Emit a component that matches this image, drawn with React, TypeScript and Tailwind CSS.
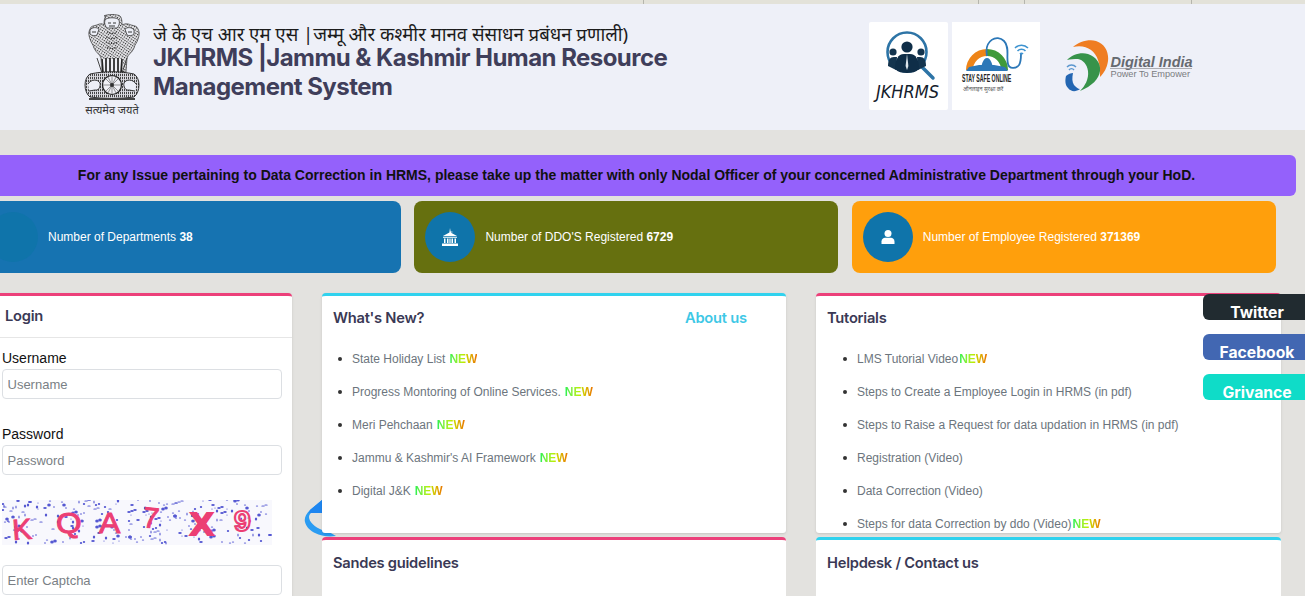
import React from "react";

const NewTag = ({ tight }: { tight?: boolean }) => (
  <span className={`inline-block bg-gradient-to-r from-[#00f050] via-[#b8f000] to-[#e87000] bg-clip-text text-[12px] leading-none font-bold text-transparent [font-family:'Liberation_Sans',sans-serif] ${tight ? "ml-[1px]" : "ml-[4px]"}`}>
    NEW
  </span>
);

const Emblem = () => (
  <svg width="56" height="88" viewBox="0 0 56 88" className="block">
    <defs>
      <pattern id="hatch" width="2.4" height="2.4" patternUnits="userSpaceOnUse" patternTransform="rotate(35)">
        <rect width="2.4" height="2.4" fill="#e6e6ea" />
        <rect width="1.3" height="1.1" fill="#2c2c2c" />
      </pattern>
      <pattern id="hatch2" width="2" height="3" patternUnits="userSpaceOnUse">
        <rect width="2" height="3" fill="#dcdce2" />
        <rect width="0.9" height="2.2" fill="#333" />
      </pattern>
    </defs>
    <path d="M20 2c3-2 13-2 16 0 2 2 2 6 2 9 4-2 7-1 9 0 4 1 6 1 7 4 2 4 1 7 0 10-1 4-3 5-4 9-2 5-6 6-7 10l-1 14H18l-1-14c-1-4-5-5-7-10-1-4-3-5-4-9-1-3-2-6 0-10 1-3 3-3 7-4 2-1 5-2 7 0 0-3 0-7 2-9z" fill="url(#hatch)" stroke="#333" strokeWidth="0.7" />
    <g fill="#eceef6" stroke="#222" strokeWidth="0.7">
      <path d="M21 6c2-3 12-3 14 0 1 3 0 6-2 8h-10c-2-2-3-5-2-8z" />
      <path d="M6 16c2-3 7-3 9-1l-2 6c-2 1-5 1-7-1z" />
      <path d="M50 16c-2-3-7-3-9-1l2 6c2 1 5 1 7-1z" />
    </g>
    <g stroke="#222" strokeWidth="0.9" fill="none">
      <path d="M24 9h3M29 9h3M25 12h6M8 18h4M44 18h4" />
      <path d="M23 18c3 2 7 2 10 0M22 23c4 2 8 2 12 0M22 28c4 2 8 2 12 0M23 33c3 2 7 2 10 0" strokeDasharray="1.5 1" />
    </g>
    <path d="M17 45h22l-1 14H18z" fill="#f0f0f5" />
    <path d="M18 45l1 14M22 44v15M26 44v15M30 44v15M34 44v15M38 45l-1 14" stroke="#222" strokeWidth="1.7" />
    <path d="M13 44l5 15M43 44l-5 15" stroke="#444" strokeWidth="1" />
    <path d="M6 60c14-3 30-3 44 0 3 2 5 6 5 11s-2 10-5 12c-14 2-30 2-44 0-3-2-5-7-5-12s2-9 5-11z" fill="url(#hatch2)" stroke="#222" strokeWidth="0.9" />
    <circle cx="28" cy="71" r="9.500" fill="#f0f0f5" stroke="#222" strokeWidth="1.2" />
    <circle cx="28" cy="71" r="2" fill="#333" />
    <path d="M28 62v18M19 71h18M22 65l12 12M34 65l-12 12M24 63l8 16M32 63l-8 16" stroke="#333" strokeWidth="0.5" />
    <path d="M4 70c3-5 10-5 12-1 1 4-2 8-5 7l-6 1M52 70c-3-5-10-5-12-1-1 4 2 8 5 7l6 1" fill="#eceef6" stroke="#222" strokeWidth="0.9" />
    <path d="M5 84h46v2H5z" fill="#444" />
  </svg>
);

const JkLogo = () => (
  <svg width="79" height="88" viewBox="0 0 79 88" className="block rounded-[2px] bg-white">
    <circle cx="38" cy="30" r="19.5" fill="#fff" stroke="#2d74a6" strokeWidth="2.6" />
    <path d="M52 44l12 12" stroke="#2d74a6" strokeWidth="3.500" strokeLinecap="round" />
    <circle cx="24" cy="30" r="3.600" fill="#14344e" />
    <circle cx="52" cy="30" r="3.600" fill="#14344e" />
    <path d="M19 44c0-6 2-9 6-9h3l-1 13zM57 44c0-6-2-9-6-9h-3l1 13z" fill="#14344e" />
    <circle cx="38" cy="25" r="5.600" fill="#0f2e48" />
    <path d="M26 47c0-9 3-15 9-15h6c6 0 9 6 9 15-3 3-7 4-12 4s-9-1-12-4z" fill="#0f2e48" />
    <path d="M38 32l-1.400 12 1.400 4 1.400-4z" fill="#dfe8ee" />
    <text x="38.500" y="76" textAnchor="middle" fontSize="18" fill="#14202c" fontFamily="'DejaVu Sans Condensed','DejaVu Sans',sans-serif" fontStyle="italic">JKHRMS</text>
  </svg>
);

const SafeLogo = () => (
  <svg width="88" height="88" viewBox="0 0 88 88" className="block bg-white">
    <path d="M14 48a21 21 0 0 1 21-21v7a14 14 0 0 0-14 14z" fill="#ee8418" />
    <path d="M35 27a21 21 0 0 1 21 21h-7a14 14 0 0 0-14-14z" fill="#3f9a3a" />
    <path d="M14 49h42l-3-4-11-2H27l-10 2z" fill="#2c78b8" />
    <path d="M29 48c0-4 2-12 6-12s6 8 6 12z" fill="#2c78b8" />
    <path d="M35 34c-3-16 10-22 17-15 6 6 2 16 4 23 1 5 8 5 11 1 2-3 2-6 2-11" fill="none" stroke="#2c78b8" strokeWidth="1.800" />
    <path d="M63 26a9 9 0 0 1 13 0M65.500 29a5.500 5.500 0 0 1 8 0M68 32a2 2 0 0 1 3 0" fill="none" stroke="#3d93d0" strokeWidth="1.600" />
    <text transform="translate(10 60) scale(0.52 1)" fontSize="10" fontWeight="700" fill="#232323" fontFamily="'Liberation Sans',sans-serif">STAY SAFE ONLINE</text>
    <text x="11" y="69" fontSize="5.500" fill="#555" fontFamily="'Noto Sans',sans-serif">ऑनलाइन सुरक्षा करें</text>
  </svg>
);

const DigitalLogo = () => (
  <svg width="130" height="54" viewBox="0 0 130 54" className="block">
    <path d="M8 7C14 2 23-1 31 1c9 3 13 11 12 20-1 7-4 12-8 16 0-6 0-12-2-17C30 10 20 4 8 7z" fill="#ef7d22" />
    <path d="M2 20c5-5 13-8 21-6 8 3 13 9 12 17-1 8-8 15-20 20 5-5 9-12 8-20-1-7-5-11-10-12-4 0-8 0-11 1z" fill="#37934a" />
    <path d="M1 36c2-2 5-3 7-3-1 5-1 9 1 12 2 2 4 4 6 4-4 3-9 3-12-1-3-3-3-8-2-12z" fill="#2466b2" />
    <path d="M2 27a6 6 0 0 1 9 0M4 30a3 3 0 0 1 5 0" fill="none" stroke="#5b97cf" strokeWidth="1.400" />
    <text x="45.500" y="26.500" fontSize="14.500" fontWeight="700" fontStyle="italic" fill="#666a70" fontFamily="'Liberation Sans',sans-serif">Digital India</text>
    <path d="M45 28.500h82" stroke="#9a9ca0" strokeWidth="0.800" />
    <text x="45.500" y="37" fontSize="9.200" fill="#7a7c80" fontFamily="'Liberation Sans',sans-serif">Power To Empower</text>
  </svg>
);

const StatIcon = ({ kind }: { kind: "none" | "bank" | "user" }) => (
  <div className="flex h-[50px] w-[50px] shrink-0 items-center justify-center rounded-full bg-[#0f74aa]">
    {kind === "bank" && (
      <svg width="20" height="20" viewBox="0 0 20 20" fill="#fff">
        <path d="M10 1l.6 3.500 3 .5-3 .6L17 9H3l6.400-3.400zM3 9.800h14v1H3zM4 11.500h1.500v4.500H4zM7 11.500h1.500v4.500H7zM11.500 11.500H13v4.500h-1.500zM14.500 11.500H16v4.500h-1.500zM9.400 11.500h1.200v4.500H9.400zM2 16.500h16V19H2z" />
      </svg>
    )}
    {kind === "user" && (
      <svg width="16" height="16" viewBox="0 0 16 16" fill="#fff">
        <circle cx="8" cy="4.500" r="3.500" />
        <path d="M1.500 15v-2.500C1.500 10 3.500 8.800 5 8.800h6c1.500 0 3.500 1.200 3.500 3.700V15z" />
      </svg>
    )}
  </div>
);

const Stat = ({ color, label, value, kind }: { color: string; label: string; value: string; kind: "none" | "bank" | "user" }) => (
  <div className={`flex h-[72px] w-[424px] shrink-0 items-center rounded-[8px] pl-[11px] ${color}`}>
    <StatIcon kind={kind} />
    <span className="ml-[10px] text-[12px] text-white [font-family:'Liberation_Sans',sans-serif]">
      {label} <b>{value}</b>
    </span>
  </div>
);

const Captcha = () => {
  const dots: { x: number; y: number; rx: number; ry: number }[] = [];
  let s = 17;
  for (let i = 0; i < 260; i++) {
    s = (s * 137 + 61) % 1009;
    const x = (s * 7) % 270;
    s = (s * 137 + 61) % 1009;
    const y = s % 44;
    dots.push({ x, y, rx: 0.6 + (s % 3) * 0.6, ry: 0.6 + (x % 3) * 0.5 });
  }
  const letter = "#ec3f74";
  return (
    <svg width="270" height="45" viewBox="0 0 270 45" className="block bg-[#f8f8fd]">
      {dots.map((d, i) => (
        <ellipse key={i} cx={d.x} cy={d.y} rx={d.rx} ry={d.ry} fill="#5558d2" />
      ))}
      <g fill={letter} stroke={letter} strokeWidth="1" fontFamily="'Liberation Sans',sans-serif">
        <text transform="translate(11 40) rotate(-4)" fontSize="29">K</text>
        <text transform="translate(54 33) scale(1.1 1)" fontSize="30">Q</text>
        <text transform="translate(97 33) scale(1.1 1)" fontSize="29">A</text>
        <text transform="translate(140 27) rotate(6)" fontSize="29">7</text>
      </g>
      <g fill={letter} stroke={letter} strokeWidth="2" fontFamily="'Liberation Sans',sans-serif" fontWeight="700">
        <text transform="translate(188 35) scale(1.1 1)" fontSize="32">X</text>
        <text x="232" y="31" fontSize="30" fill="none" strokeWidth="2.200">9</text>
      </g>
    </svg>
  );
};

const Field = ({ placeholder }: { placeholder: string }) => (
  <input
    placeholder={placeholder}
    className="block h-[30px] w-[280px] rounded-[4px] border border-[#dcdfe3] bg-white px-[4.500px] text-[13px] outline-none placeholder:text-[#7a7f85] [font-family:'Liberation_Sans',sans-serif]"
  />
);

const Title = ({ children, className = "text-[#3a3955]" }: { children: React.ReactNode; className?: string }) => (
  <h3 className={`text-[14.7px] leading-[20px] font-semibold tracking-[-0.25px] [font-family:Inter,sans-serif] ${className}`}>{children}</h3>
);

const Item = ({ text, isNew, tight }: { text: string; isNew?: boolean; tight?: boolean }) => (
  <li className="flex h-[33px] items-center text-[12px] whitespace-pre text-[#6c757d] [font-family:'Liberation_Sans',sans-serif]">
    <span className="mr-[10px] ml-[-12px] h-[4px] w-[4px] shrink-0 rounded-full bg-[#333]" />
    {text}
    {isNew && <NewTag tight={tight} />}
  </li>
);

const Side = ({ text, color }: { text: string; color: string }) => (
  <div className={`flex h-[26px] w-[102px] justify-center overflow-hidden rounded-l-[6px] pt-[10px] pl-[6px] text-[15.700px] leading-[18px] font-bold text-white [font-family:Inter,sans-serif] ${color}`}>
    {text}
  </div>
);

export default function App() {
  return (
    <div className="relative h-[596px] w-[1305px] overflow-hidden bg-[#e3e2df]">
      <div className="relative h-[4px] bg-[#e3e2d9]">
        <span className="absolute left-[643px] h-[4px] w-px bg-[#b5b5ad]" />
        <span className="absolute left-[978px] h-[4px] w-px bg-[#b5b5ad]" />
        <span className="absolute left-[1024px] h-[4px] w-px bg-[#b5b5ad]" />
        <span className="absolute left-[1191px] h-[4px] w-px bg-[#b5b5ad]" />
      </div>

      <header className="flex h-[126px] items-center bg-[#eef0f8] pl-[81px]">
        <div className="mb-[4px] flex w-[62px] flex-col items-center">
          <Emblem />
          <span className="mt-[2px] text-[11px] leading-[12px] whitespace-nowrap text-[#333] [font-family:'Noto_Sans','Liberation_Serif',serif]">सत्यमेव जयते</span>
        </div>
        <div className="mb-[10px] ml-[10px] w-[640px]">
          <div className="text-[18.600px] leading-[22px] whitespace-nowrap text-[#1c1c1c] [font-family:'Noto_Sans','Liberation_Serif',serif]">
            जे के एच आर एम एस |जम्मू और कश्मीर मानव संसाधन प्रबंधन प्रणाली)
          </div>
          <h1 className="mt-[-2px] text-[24px] leading-[29px] font-bold tracking-[-0.55px] whitespace-nowrap text-[#3f3e5a] [font-family:Inter,sans-serif]">
            JKHRMS |Jammu &amp; Kashmir Human Resource
            <br />
            Management System
          </h1>
        </div>
        <div className="mb-[2px] ml-[76px] flex gap-[4px]">
          <JkLogo />
          <SafeLogo />
        </div>
        <div className="ml-[25px]">
          <DigitalLogo />
        </div>
      </header>

      <div className="ml-[-23px] w-[1319px]">
        <div className="mt-[25px] flex h-[41px] items-center justify-center rounded-[6px] bg-[#9461fb] text-[14px] font-bold text-[#111] [font-family:'Liberation_Sans',sans-serif]">
          For any Issue pertaining to Data Correction in HRMS, please take up the matter with only Nodal Officer of your concerned Administrative Department through your HoD.
        </div>
        <div className="mt-[5px] flex gap-[13.400px]">
          <Stat color="bg-[#1673b1]" kind="none" label="Number of Departments" value="38" />
          <Stat color="bg-[#66700f]" kind="bank" label="Number of DDO'S Registered" value="6729" />
          <Stat color="bg-[#ff9f0c]" kind="user" label="Number of Employee Registered" value="371369" />
        </div>
      </div>

      <main className="relative mt-[20px] flex gap-[30px]">
        <section className="relative z-10 h-[310px] w-[292px] shrink-0 rounded-tr-[4px] border-t-[3px] border-[#ec407a] bg-white shadow-sm">
          <div className="h-[42px] border-b border-[#e6e6e6] pt-[10px] pl-[5px]">
            <Title>Login</Title>
          </div>
          <div className="pl-[2px] [font-family:'Liberation_Sans',sans-serif]">
            <label className="mt-[12px] block text-[14px] leading-[17px] text-[#111]">Username</label>
            <div className="mt-[2px]"><Field placeholder="Username" /></div>
            <label className="mt-[27px] block text-[14px] leading-[17px] text-[#111]">Password</label>
            <div className="mt-[2px]"><Field placeholder="Password" /></div>
            <div className="mt-[25px]"><Captcha /></div>
            <div className="mt-[20px]"><Field placeholder="Enter Captcha" /></div>
          </div>
        </section>

        <svg width="40" height="42" viewBox="0 0 40 42" className="absolute top-[206px] left-[303px]">
          <path d="M19 1L7 11c-4 4-6 8-5 12 1 5 6 9 10 11 6 3 13 4 21 3l-7-4c-3 0-5-1-7-2-7-3-13-8-13-13 0-2 1-3 2-4h11z" fill="#2b9cf2" />
          <path d="M19 1L7 11l-1 3h13z" fill="#1f86f0" />
        </svg>

        <div className="relative z-10 flex w-[464px] shrink-0 flex-col gap-[4px]">
          <section className="h-[240px] overflow-hidden rounded-t-[4px] rounded-b-[3px] border-t-[3px] border-[#30d2ee] bg-white shadow-sm">
            <div className="flex pt-[12px] pl-[11px]">
              <Title className="w-[352px] text-[#3a3955]">What's New?</Title>
              <Title className="text-[#3ec8e6]">About us</Title>
            </div>
            <ul className="mt-[14px] pl-[28px]">
              <Item text="State Holiday List" isNew />
              <Item text="Progress Montoring of Online Services." isNew />
              <Item text="Meri Pehchaan" isNew />
              <Item text="Jammu & Kashmir's AI Framework" isNew />
              <Item text="Digital J&K" isNew />
            </ul>
          </section>
          <section className="h-[70px] rounded-t-[4px] border-t-[3px] border-[#ec407a] bg-white pt-[13px] pl-[11px]">
            <Title>Sandes guidelines</Title>
          </section>
        </div>

        <div className="relative z-10 flex w-[465px] shrink-0 flex-col gap-[4px]">
          <section className="h-[240px] overflow-hidden rounded-t-[4px] rounded-b-[3px] border-t-[3px] border-[#ec407a] bg-white shadow-sm">
            <div className="pt-[12px] pl-[11px]"><Title>Tutorials</Title></div>
            <ul className="mt-[14px] pl-[39px]">
              <Item text="LMS Tutorial Video" isNew tight />
              <Item text="Steps to Create a Employee Login in HRMS (in pdf)" />
              <Item text="Steps to Raise a Request for data updation in HRMS (in pdf)" />
              <Item text="Registration (Video)" />
              <Item text="Data Correction (Video)" />
              <Item text="Steps for data Correction by ddo (Video)" isNew tight />
            </ul>
          </section>
          <section className="h-[70px] rounded-t-[4px] border-t-[3px] border-[#30d2ee] bg-white pt-[13px] pl-[11px]">
            <Title>Helpdesk / Contact us</Title>
          </section>
        </div>
      </main>

      <aside className="absolute top-[294px] right-0 z-20 flex flex-col gap-[14px]">
        <Side text="Twitter" color="bg-[#212b30]" />
        <Side text="Facebook" color="bg-[#4267b2]" />
        <Side text="Grivance" color="bg-[#0fdcc8]" />
      </aside>
    </div>
  );
}
